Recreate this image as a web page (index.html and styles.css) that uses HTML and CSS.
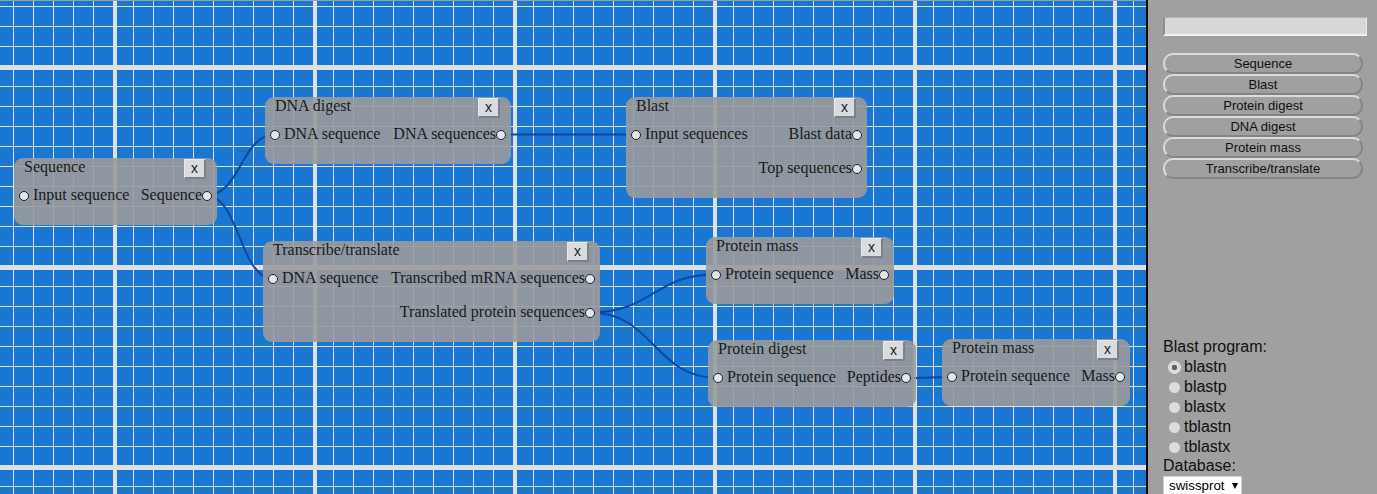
FILE: index.html
```html
<!DOCTYPE html>
<html>
<head>
<meta charset="utf-8">
<title>Workflow editor</title>
<link rel="stylesheet" href="styles.css">
</head>
<body>
<div class="app">
  <main class="canvas">
    <svg class="wires" width="1146" height="494" viewBox="0 0 1146 494">
      <path d="M206 195.5 C241 195.5, 240.5 134.5, 275.5 134.5"/>
      <path d="M206 195.5 C239.5 195.5, 239.5 278.5, 273 278.5"/>
      <path d="M501 134.5 L636 134.5"/>
      <path d="M590 312.5 C653 312.5, 653 274.5, 716 274.5"/>
      <path d="M590 312.5 C654 312.5, 654 378, 718 378"/>
      <path d="M906 378 C929 378, 929 377, 952 377"/>
    </svg>

    <div class="node" style="left:14px;top:158px;width:203px">
      <div class="node-head"><span class="node-title">Sequence</span><button class="node-close">x</button></div>
      <div class="port-row"><span class="port"><i class="dot"></i> Input sequence</span><span class="port">Sequence<i class="dot"></i></span></div>
    </div>

    <div class="node" style="left:265px;top:97px;width:246px">
      <div class="node-head"><span class="node-title">DNA digest</span><button class="node-close">x</button></div>
      <div class="port-row"><span class="port"><i class="dot"></i> DNA sequence</span><span class="port">DNA sequences<i class="dot"></i></span></div>
    </div>

    <div class="node" style="left:626px;top:97px;width:241px">
      <div class="node-head"><span class="node-title">Blast</span><button class="node-close">x</button></div>
      <div class="port-row"><span class="port"><i class="dot"></i> Input sequences</span><span class="port">Blast data<i class="dot"></i></span></div>
      <div class="port-row"><span class="port out-only">Top sequences<i class="dot"></i></span></div>
    </div>

    <div class="node" style="left:263px;top:241px;width:337px">
      <div class="node-head"><span class="node-title">Transcribe/translate</span><button class="node-close">x</button></div>
      <div class="port-row"><span class="port"><i class="dot"></i> DNA sequence</span><span class="port">Transcribed mRNA sequences<i class="dot"></i></span></div>
      <div class="port-row"><span class="port out-only">Translated protein sequences<i class="dot"></i></span></div>
    </div>

    <div class="node" style="left:706px;top:237px;width:188px">
      <div class="node-head"><span class="node-title">Protein mass</span><button class="node-close">x</button></div>
      <div class="port-row"><span class="port"><i class="dot"></i> Protein sequence</span><span class="port">Mass<i class="dot"></i></span></div>
    </div>

    <div class="node" style="left:708px;top:340px;width:208px">
      <div class="node-head"><span class="node-title">Protein digest</span><button class="node-close">x</button></div>
      <div class="port-row"><span class="port"><i class="dot"></i> Protein sequence</span><span class="port">Peptides<i class="dot"></i></span></div>
    </div>

    <div class="node" style="left:942px;top:339px;width:188px">
      <div class="node-head"><span class="node-title">Protein mass</span><button class="node-close">x</button></div>
      <div class="port-row"><span class="port"><i class="dot"></i> Protein sequence</span><span class="port">Mass<i class="dot"></i></span></div>
    </div>
  </main>

  <aside class="sidebar">
    <input class="search" type="text">
    <div class="tool-list">
      <button class="tool-btn">Sequence</button>
      <button class="tool-btn">Blast</button>
      <button class="tool-btn">Protein digest</button>
      <button class="tool-btn">DNA digest</button>
      <button class="tool-btn">Protein mass</button>
      <button class="tool-btn">Transcribe/translate</button>
    </div>
    <div class="blast-opts">
      <div class="opt-label">Blast program:</div>
      <label class="radio-row first-row"><input type="radio" name="prog" checked>blastn</label>
      <label class="radio-row"><input type="radio" name="prog">blastp</label>
      <label class="radio-row"><input type="radio" name="prog">blastx</label>
      <label class="radio-row"><input type="radio" name="prog">tblastn</label>
      <label class="radio-row"><input type="radio" name="prog">tblastx</label>
      <div class="opt-label">Database:</div>
      <div class="select">swissprot<span class="caret"></span></div>
    </div>
  </aside>
</div>
</body>
</html>
```
FILE: styles.css
```css
html, body {
  margin: 0;
  padding: 0;
  height: 100%;
  overflow: hidden;
}
body {
  background: #a0a0a0;
}
.app {
  display: flex;
  width: 1377px;
  height: 494px;
}
.canvas {
  position: relative;
  width: 1146px;
  height: 494px;
  flex: none;
  background-color: #1976d2;
  background-image:
    linear-gradient(#9e9e9e, #9e9e9e),
    linear-gradient(to right, #e0e0e0 4px, transparent 4px),
    linear-gradient(to bottom, #e0e0e0 5px, transparent 5px),
    linear-gradient(to right, #e0e0e0 1px, transparent 1px),
    linear-gradient(to bottom, #e0e0e0 1px, transparent 1px);
  background-size:
    100% 1px,
    200px 200px,
    200px 200px,
    20px 20px,
    20px 20px;
  background-position:
    0 0,
    113px 0,
    0 65px,
    13px 0,
    0 6px;
  background-repeat: no-repeat, repeat, repeat, repeat, repeat;
}
.wires {
  position: absolute;
  left: 0;
  top: 0;
}
.wires path {
  fill: none;
  stroke: #0d47a1;
  stroke-width: 2;
}
.node {
  position: absolute;
  box-sizing: border-box;
  padding: 0 5px 12px;
  background: rgba(155, 155, 155, 0.9);
  border-radius: 9px;
  font: 16px "Liberation Serif", "Times New Roman", serif;
  color: #1a1a1a;
}
.node-head {
  display: flex;
  justify-content: space-between;
  align-items: flex-start;
  height: 21px;
  padding-left: 5px;
}
.node-title {
  line-height: normal;
  white-space: nowrap;
}
.node-close {
  margin: 1px 6px 0 0;
  width: 22px;
  height: 20px;
  box-sizing: border-box;
  padding: 0 0 2px;
  border: 0;
  border-top: 1px solid #e8ebee;
  border-left: 1px solid #e8ebee;
  border-right: 2px solid #7c8188;
  border-bottom: 2px solid #7c8188;
  background: #d8dcdf;
  font: 14px "Liberation Sans", Arial, sans-serif;
  color: #222;
  line-height: 16px;
}
.port-row {
  display: flex;
  justify-content: space-between;
  height: 34px;
  box-sizing: border-box;
  padding-top: 7px;
  white-space: nowrap;
}
.port {
  line-height: normal;
}
.out-only {
  margin-left: auto;
}
.dot {
  display: inline-block;
  width: 8px;
  height: 8px;
  border: 1px solid #222;
  border-radius: 50%;
  background: #e3e6e9;
  vertical-align: middle;
}
.sidebar {
  flex: 1;
  box-sizing: border-box;
  border-left: 2px solid #000;
  background: #a0a0a0;
  padding-left: 15px;
  display: flex;
  flex-direction: column;
  align-items: flex-start;
  font-family: "Liberation Sans", Arial, sans-serif;
  color: #111;
  overflow: hidden;
}
.sidebar > * {
  flex-shrink: 0;
}
.search {
  margin: 17px 0 0;
  width: 204px;
  height: 19px;
  box-sizing: border-box;
  padding: 0;
  border: 0;
  border-top: 1px solid #b4b4b4;
  border-left: 2px solid #8e8e8e;
  border-right: 1px solid #ececec;
  border-bottom: 2px solid #f2f2f2;
  background: #d8d8d8;
}
.tool-list {
  margin-top: 17px;
  display: flex;
  flex-direction: column;
}
.tool-btn {
  flex-shrink: 0;
  width: 200px;
  height: 21px;
  box-sizing: border-box;
  padding: 0;
  border: 2px solid;
  border-color: #dcdcdc #848484 #848484 #dcdcdc;
  border-radius: 10px;
  background: #a0a0a0;
  font: 13px "Liberation Sans", Arial, sans-serif;
  color: #111;
  line-height: 15px;
}
.blast-opts {
  margin-top: 159px;
  display: flex;
  flex-direction: column;
  font-size: 16px;
}
.blast-opts > * {
  flex-shrink: 0;
}
.opt-label {
  line-height: 18px;
  height: 18px;
}
.radio-row {
  display: flex;
  align-items: center;
  height: 20px;
  line-height: 18px;
}
.first-row {
  margin-top: 1px;
}
.radio-row input {
  appearance: none;
  -webkit-appearance: none;
  width: 11px;
  height: 11px;
  margin: 0 4px 0 6px;
  border-radius: 50%;
  background: #dcdcdc;
}
.radio-row input:checked {
  background: radial-gradient(circle, #626262 0 2.5px, #dcdcdc 3px);
  box-shadow: 0 0 0 1px #ececec;
}
.select {
  margin-top: 1px;
  width: 79px;
  height: 19px;
  box-sizing: border-box;
  padding-left: 5px;
  background: #fff;
  border: 1px solid #d0d0d0;
  font-size: 13.33px;
  line-height: 17px;
  color: #000;
  display: flex;
  align-items: center;
}
.caret {
  margin-left: 7px;
  width: 0;
  height: 0;
  border-left: 3px solid transparent;
  border-right: 3px solid transparent;
  border-top: 6px solid #000;
}
```
